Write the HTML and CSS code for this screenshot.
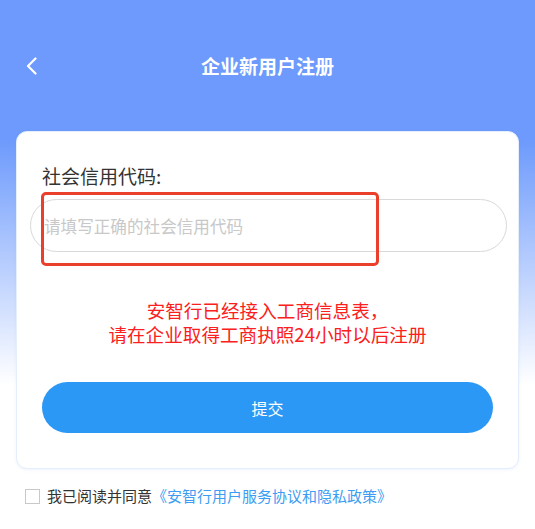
FILE: index.html
```html
<!DOCTYPE html>
<html lang="zh-CN">
<head>
<meta charset="utf-8">
<title>企业新用户注册</title>
<link rel="stylesheet" href="styles.css">
</head>
<body>
<div class="page">
  <header class="nav">
    <span class="back">
      <svg width="12" height="18" viewBox="0 0 12 18"><path d="M10.5 1.5 L3 9 L10.5 16.5" fill="none" stroke="#fff" stroke-width="2.2" stroke-linecap="round" stroke-linejoin="round"/></svg>
    </span>
    <h1 class="title">企业新用户注册</h1>
  </header>
  <main class="card">
    <div class="label">社会信用代码:</div>
    <div class="field">
      <input class="input" type="text" placeholder="请填写正确的社会信用代码">
      <div class="mark"></div>
    </div>
    <div class="notice">
      <span class="notice-line">安智行已经接入工商信息表，</span>
      <span class="notice-line">请在企业取得工商执照24小时以后注册</span>
    </div>
    <button class="submit" type="button">提交</button>
  </main>
  <div class="agree">
    <span class="checkbox"></span>
    <span class="agree-text">我已阅读并同意<a class="link">《安智行用户服务协议和隐私政策》</a></span>
  </div>
</div>
</body>
</html>
```
FILE: styles.css
```css
* { box-sizing: border-box; }
html, body { margin: 0; padding: 0; }
body {
  font-family: "Noto Sans CJK SC", "Noto Sans", sans-serif;
  background: #fff;
}
.page {
  min-height: 529px;
  background: linear-gradient(180deg, #6d9afc 0, #6d9afc 140px, #fff 385px);
  overflow: hidden;
}
.nav {
  position: relative;
  margin-top: 44px;
  height: 44px;
  display: flex;
  align-items: center;
  justify-content: center;
}
.back {
  position: absolute;
  left: 25px;
  top: 13px;
  width: 12px;
  height: 18px;
  display: flex;
}
.title {
  margin: 0;
  font-size: 19px;
  font-weight: 700;
  color: #fff;
  line-height: 44px;
}
.card {
  margin: 43px 16px 0;
  background: #fff;
  border: 1px solid #e4eefc;
  border-radius: 11px;
  box-shadow: 0 1px 3px rgba(120, 160, 230, 0.12);
  padding: 31px 25px 35px;
}
.label {
  font-size: 19px;
  line-height: 26px;
  color: #333;
}
.field {
  position: relative;
  margin: 10px -14px 0 -12px;
}
.input {
  display: block;
  width: 100%;
  height: 53px;
  border: 1px solid #d9d9d9;
  border-radius: 27px;
  padding: 0 13px;
  font-family: inherit;
  font-size: 16.6px;
  color: #333;
  outline: none;
  background: #fff;
}
.input::placeholder { color: #c8c8c8; }
.mark {
  position: absolute;
  left: 11px;
  top: -7px;
  width: 338px;
  height: 74px;
  border: 3px solid #ea3f2b;
  border-radius: 5px;
  pointer-events: none;
}
.notice {
  margin-top: 46px;
  display: flex;
  flex-direction: column;
  align-items: center;
  font-size: 18.6px;
  line-height: 24px;
  color: #fb2020;
}
.notice-line { display: block; }
.submit {
  display: block;
  width: 100%;
  height: 51px;
  margin-top: 36px;
  border: none;
  border-radius: 26px;
  background: #2b98f6;
  color: #fff;
  font-family: inherit;
  font-size: 16px;
}
.agree {
  display: flex;
  align-items: center;
  gap: 7px;
  margin-top: 16px;
  padding-left: 25px;
  line-height: 22px;
}
.checkbox {
  width: 15px;
  height: 15px;
  border: 1px solid #c9c9c9;
  background: #fff;
  flex: none;
}
.agree-text {
  font-size: 15px;
  color: #333;
}
.link { color: #3c9df2; }
```
